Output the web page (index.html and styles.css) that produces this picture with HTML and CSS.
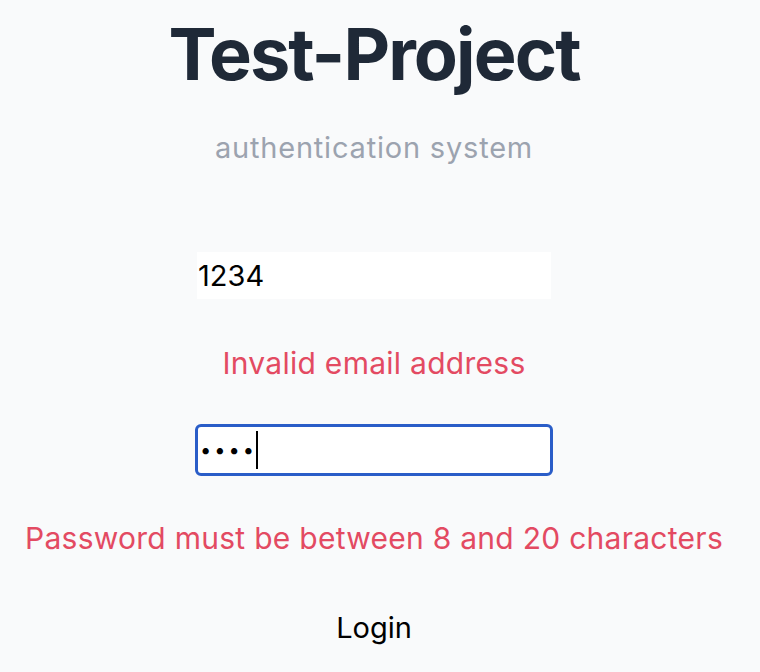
FILE: index.html
```html
<!DOCTYPE html>
<html lang="en">
<head>
<meta charset="utf-8">
<title>Test-Project</title>
<link rel="stylesheet" href="styles.css">
</head>
<body>
<main class="page">
  <h1 class="title">Test-Project</h1>
  <p class="subtitle">authentication system</p>
  <form class="form">
    <input class="field" type="text" value="1234">
    <p class="error">Invalid email address</p>
    <div class="field field-focus"><span class="dots">••••</span><span class="caret"></span></div>
    <p class="error error-last">Password must be between 8 and 20 characters</p>
    <button class="login" type="button">Login</button>
  </form>
</main>
</body>
</html>
```
FILE: styles.css
```css
html, body {
  margin: 0;
  padding: 0;
  background: #f9fafb;
  font-family: Inter, "Noto Sans", sans-serif;
}
.page {
  display: flex;
  flex-direction: column;
  align-items: center;
  padding: 12px 12px 0 0;
}
.title {
  margin: 0;
  font-size: 72px;
  font-weight: 700;
  line-height: 84px;
  color: #1f2937;
  letter-spacing: -1.9px;
}
.subtitle {
  margin: 34px 0 0;
  font-size: 29px;
  line-height: 36px;
  color: #9ca3af;
  letter-spacing: 0.8px;
}
.form {
  display: flex;
  flex-direction: column;
  align-items: center;
  margin-top: 86px;
}
.field {
  box-sizing: border-box;
  width: 354px;
  height: 47px;
  border: none;
  background: #fff;
  padding: 0 1px;
  font-family: inherit;
  font-size: 29px;
  color: #000;
  outline: none;
  display: flex;
  align-items: center;
}
.field-focus {
  width: 358px;
  height: 52px;
  border: 3px solid #2a5dc8;
  border-radius: 6px;
  padding: 0 2px;
}
.dots {
  font-size: 20px;
  letter-spacing: 3px;
}
.caret {
  display: inline-block;
  width: 2px;
  height: 38px;
  margin-left: -1px;
  background: #000;
}
.error {
  margin: 46px 0 43px;
  font-size: 30px;
  line-height: 36px;
  color: #e34a62;
  letter-spacing: 0.27px;
}
.error-last {
  margin: 44px 0 0;
}
.login {
  margin-top: 54px;
  border: none;
  background: none;
  font-family: inherit;
  font-size: 29px;
  line-height: 36px;
  color: #000;
  padding: 0;
}
```
